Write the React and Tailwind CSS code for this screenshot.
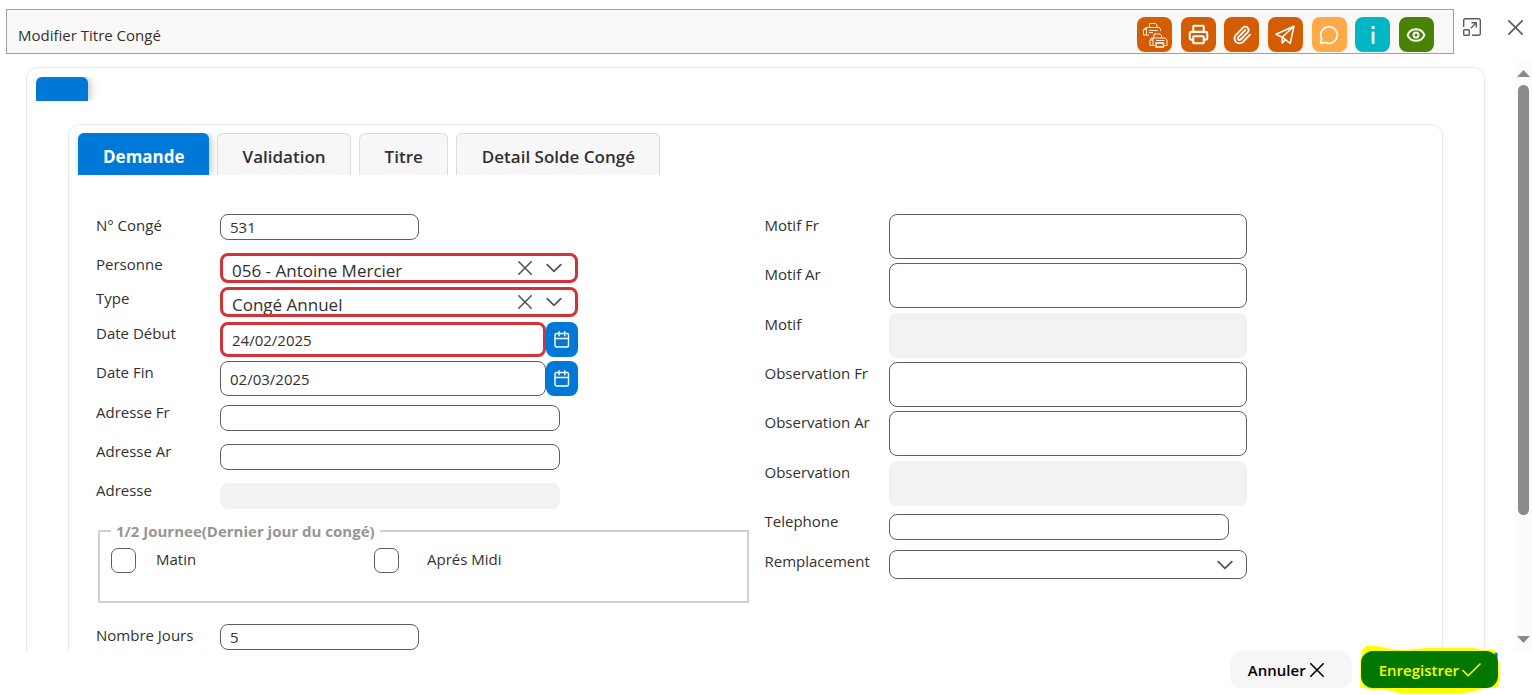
import { Eye, MessageCircle, Paperclip, Printer } from "lucide-react";

const leftAddress = [
  { id: "adresseFr", label: "Adresse Fr" },
  { id: "adresseAr", label: "Adresse Ar" },
  { id: "adresse", label: "Adresse", disabled: true },
];

const rightAreas = [
  { id: "motifFr", label: "Motif Fr", row: "h-[49px]" },
  { id: "motifAr", label: "Motif Ar", row: "h-[50px]" },
  { id: "motif", label: "Motif", row: "h-[49px]", disabled: true },
  { id: "observationFr", label: "Observation Fr", row: "h-[49px]" },
  { id: "observationAr", label: "Observation Ar", row: "h-[50px]" },
  { id: "observation", label: "Observation", row: "h-[49px]", disabled: true },
];

const inputClass =
  "block h-[26px] rounded-[8px] border border-[#605e5c] bg-white px-[9px] text-[15px] outline-none disabled:border-[#f3f2f1] disabled:bg-[#f3f2f1]";

function Row({ id, label, className = "h-[39px]", children }) {
  return (
    <div className={`flex items-start ${className}`}>
      <label htmlFor={id} className="w-[124px] shrink-0 whitespace-nowrap text-[15px] leading-[22px]">
        {label}
      </label>
      {children}
    </div>
  );
}

function Chevron() {
  return (
    <svg viewBox="0 0 16 16" className="size-4 shrink-0" fill="none" stroke="#555" strokeWidth="1.8" strokeLinecap="round" strokeLinejoin="round" aria-hidden="true">
      <path d="M1.2 4.6 8 11.4l6.8-6.8" />
    </svg>
  );
}

function Cross({ className = "size-[14px]" }) {
  return (
    <svg viewBox="0 0 14 14" className={className} fill="none" stroke="currentColor" strokeWidth="1.6" strokeLinecap="round" aria-hidden="true">
      <path d="M.8.8l12.4 12.4M13.2.8.8 13.2" />
    </svg>
  );
}

function ComboBox({ id, value }) {
  return (
    <div className="flex h-[30px] w-[358px] items-center overflow-hidden rounded-[8px] border-3 border-[#d13438] bg-white pr-[13px]">
      <select id={id} defaultValue={value} className="h-7 min-w-0 flex-1 appearance-none bg-transparent pl-[9px] pt-[5px] text-[17px] leading-6 outline-none">
        <option>{value}</option>
      </select>
      <button type="button" aria-label="Effacer" className="mr-[14px] text-[#555]">
        <Cross />
      </button>
      <Chevron />
    </div>
  );
}

function DateBox({ id, value, required }) {
  return (
    <div className="flex h-[35px] w-[358px]">
      <input
        id={id}
        type="text"
        defaultValue={value}
        className={`min-w-0 flex-1 rounded-[8px] bg-white px-[9px] pt-[2px] text-[15px] outline-none ${
          required ? "border-3 border-[#d13438]" : "border border-[#605e5c]"
        }`}
      />
      <button type="button" aria-label="Calendrier" className="flex w-8 items-center justify-center rounded-[8px] bg-[#0078d7]">
        <svg viewBox="0 0 16 18" className="h-[18px] w-4" fill="none" stroke="white" strokeWidth="1.4" strokeLinecap="round" aria-hidden="true">
          <rect x="1" y="2.5" width="13.5" height="13.5" rx="1.5" />
          <path d="M1 7.5h13.5M5 .8v4M10.7 .8v4" />
        </svg>
      </button>
    </div>
  );
}

function MultiPrinterIcon() {
  return (
    <svg viewBox="0 0 26 26" className="size-[26px]" fill="none" stroke="#fff" strokeWidth=".9" strokeLinejoin="round" aria-hidden="true">
      <path d="M7.5 5.5v-4h6l1.5 1.500v2.500M4 5.500h13.500l1 2V9M4 5.500 1.500 7.500v5.500H7M1.500 7.500h3M4.500 5.500v7.500M7 8.500h8.500" />
      <path d="M7 10.500h4" />
      <path d="M12 16v-4h6l1.500 1.500V16M9.500 16h13.500l2 2v5.500h-3M9.500 16 8 18v5.500h5M11 16v7.500M14 18.500h8.500M8 18h3" />
      <path d="M14 21h7.500v4H14z" strokeWidth="1.300" />
    </svg>
  );
}

function SendIcon() {
  return (
    <svg viewBox="0 0 20 20" className="size-5" fill="none" stroke="#fff" strokeWidth="1.5" strokeLinecap="round" strokeLinejoin="round" aria-hidden="true">
      <path d="M19 1.200 1 9.300l6.200 2.900 8 6.200zM19 1.200 7.200 12.200v5.800l3.200-3.300" />
    </svg>
  );
}

function InfoIcon() {
  return (
    <svg viewBox="0 0 20 20" className="size-5" fill="#fff" aria-hidden="true">
      <rect x="8.5" y="1" width="3.2" height="3" rx="1" />
      <rect x="8.7" y="6.5" width="2.8" height="12.5" rx="1" />
    </svg>
  );
}

const actions = [
  { label: "Imprimer tout", bg: "bg-[#d35d00]", icon: <MultiPrinterIcon /> },
  { label: "Imprimer", bg: "bg-[#d35d00]", icon: <Printer size={21} strokeWidth={2.3} /> },
  { label: "Pièces jointes", bg: "bg-[#d35d00]", icon: <Paperclip size={20} strokeWidth={2.2} /> },
  { label: "Envoyer", bg: "bg-[#d35d00]", icon: <SendIcon /> },
  { label: "Commentaires", bg: "bg-[#ffaa46]", icon: <MessageCircle size={20} strokeWidth={2.1} /> },
  { label: "Informations", bg: "bg-[#00b7c3]", icon: <InfoIcon /> },
  { label: "Aperçu", bg: "bg-[#498205]", icon: <Eye size={20} strokeWidth={2.4} /> },
];

const tabs = ["Demande", "Validation", "Titre", "Detail Solde Congé"];

export default function App() {
  return (
    <div className="flex h-screen flex-col overflow-hidden bg-white font-['Open_Sans',sans-serif] text-[#323130]">
      <header className="flex shrink-0 items-start pl-[6px] pt-[9px]">
        <div className="flex h-[45px] flex-1 items-start justify-between border border-[#a19f9d] bg-[#faf9f8] pl-[11px] pr-[19px] pt-[7px]">
          <h1 className="pt-[7px] text-[15px] leading-[22px]">Modifier Titre Congé</h1>
          <div className="flex w-[297px] justify-between">
            {actions.map((a) => (
              <button
                key={a.label}
                type="button"
                aria-label={a.label}
                className={`flex size-[35px] items-center justify-center rounded-[8px] text-white ${a.bg}`}
              >
                {a.icon}
              </button>
            ))}
          </div>
        </div>
        <div className="flex w-[78px] items-center justify-between pl-[9px] pr-[9px] pt-[9px] text-[#605e5c]">
          <button type="button" aria-label="Agrandir">
            <svg viewBox="0 0 18 18" className="size-[18px]" fill="none" stroke="currentColor" strokeWidth="1.4" aria-hidden="true">
              <path d="M.7 9V2.500Q.7.700 2.500.700h13q1.800 0 1.800 1.800v13q0 1.800-1.800 1.800H9" />
              <rect x=".7" y="11.7" width="5.6" height="5.6" rx=".8" />
              <path d="M7.800 10.200 13 5M8.500 4.700h4.800v4.800" />
            </svg>
          </button>
          <button type="button" aria-label="Fermer">
            <Cross className="size-[15px]" />
          </button>
        </div>
      </header>

      <div className="mt-2 flex min-h-0 flex-1">
        <main className="min-w-0 flex-1 overflow-hidden pl-[26px] pr-[30px] pt-[5px]">
          <section className="min-h-[800px] rounded-[12px] border border-[#eaeaea] px-[41px] pt-[9px]">
            <div className="-ml-8 overflow-hidden">
              <button type="button" aria-label="Onglet" className="block h-6 w-[52px] rounded-t-[6px] bg-[#0078d7] shadow-[2px_0_8px_rgba(0,0,0,0.25)]" />
            </div>

            <div className="mt-[23px] min-h-[700px] rounded-[12px] border border-[#eaeaea] pt-2">
              <div role="tablist" className="flex gap-2 overflow-hidden pl-[9px]">
                {tabs.map((t, i) => (
                  <button
                    key={t}
                    type="button"
                    role="tab"
                    aria-selected={i === 0}
                    className={`h-[42px] rounded-t-[6px] pl-[25px] pr-6 pt-[5px] text-[17px] leading-6 ${
                      i === 0
                        ? "bg-[#0078d7] font-bold text-white shadow-[2px_0_8px_rgba(0,0,0,0.25)]"
                        : "border border-b-0 border-[#dcdcdc] bg-[#f7f7f7] font-semibold"
                    }`}
                  >
                    {t}
                  </button>
                ))}
              </div>

              <form className="grid grid-cols-2 pt-[39px]">
                <div className="pl-[27px]">
                  <Row id="numero" label="N° Congé">
                    <input id="numero" type="text" defaultValue="531" className={`${inputClass} w-[199px]`} />
                  </Row>
                  <Row id="personne" label="Personne" className="h-[34px]">
                    <ComboBox id="personne" value="056 - Antoine Mercier" />
                  </Row>
                  <Row id="type" label="Type" className="h-[35px]">
                    <ComboBox id="type" value="Congé Annuel" />
                  </Row>
                  <Row id="dateDebut" label="Date Début">
                    <DateBox id="dateDebut" value="24/02/2025" required />
                  </Row>
                  <Row id="dateFin" label="Date Fin" className="h-10">
                    <DateBox id="dateFin" value="02/03/2025" />
                  </Row>
                  {leftAddress.map((f) => (
                    <Row key={f.id} id={f.id} label={f.label}>
                      <input id={f.id} type="text" disabled={f.disabled} className={`${inputClass} mt-1 w-[340px]`} />
                    </Row>
                  ))}

                  <fieldset className="ml-[2px] mr-[7px] mt-[2px] h-[83px] border-2 border-[#d0d0d0] pl-[11px]">
                    <legend className="px-[5px] text-[15px] font-bold leading-[22px] text-[#979593]">
                      1/2 Journee(Dernier jour du congé)
                    </legend>
                    <div className="flex pt-[6px]">
                      <div className="flex w-[263px]">
                        <input id="matin" type="checkbox" className="size-[25px] appearance-none rounded-[7px] border border-[#605e5c] bg-white" />
                        <label htmlFor="matin" className="pl-5 text-[15px] leading-[22px]">Matin</label>
                      </div>
                      <div className="flex">
                        <input id="apresMidi" type="checkbox" className="size-[25px] appearance-none rounded-[7px] border border-[#605e5c] bg-white" />
                        <label htmlFor="apresMidi" className="pl-7 text-[15px] leading-[22px]">Aprés Midi</label>
                      </div>
                    </div>
                  </fieldset>

                  <div className="mt-[21px]">
                    <Row id="nombreJours" label="Nombre Jours">
                      <input id="nombreJours" type="text" defaultValue="5" className={`${inputClass} w-[199px]`} />
                    </Row>
                  </div>
                </div>

                <div className="pl-[9px]">
                  {rightAreas.map((f) => (
                    <Row key={f.id} id={f.id} label={f.label} className={f.row}>
                      <textarea
                        id={f.id}
                        disabled={f.disabled}
                        className="block h-[45px] w-[358px] resize-none rounded-[8px] border border-[#605e5c] bg-white px-2 text-[15px] outline-none disabled:border-[#f3f2f1] disabled:bg-[#f3f2f1]"
                      />
                    </Row>
                  ))}
                  <Row id="telephone" label="Telephone" className="h-10">
                    <input id="telephone" type="tel" className={`${inputClass} mt-1 w-[340px]`} />
                  </Row>
                  <Row id="remplacement" label="Remplacement">
                    <div className="flex h-[29px] w-[358px] items-center rounded-[8px] border border-[#605e5c] bg-white pr-[13px]">
                      <select id="remplacement" className="h-6 min-w-0 flex-1 appearance-none bg-transparent pl-2 outline-none">
                        <option></option>
                      </select>
                      <Chevron />
                    </div>
                  </Row>
                </div>
              </form>
            </div>
          </section>
        </main>

        <div className="flex w-[17px] shrink-0 flex-col items-center justify-between bg-[#fcfcfc] py-2" aria-hidden="true">
          <svg viewBox="0 0 13 7" className="h-[7px] w-[13px] shrink-0" fill="#8a8a8a">
            <path d="M6.500 0 13 7H0z" />
          </svg>
          <div className="mb-auto mt-2 h-[75%] w-[11px] rounded-full bg-[#8a8a8a]" />
          <svg viewBox="0 0 13 7" className="h-[7px] w-[13px] shrink-0" fill="#8a8a8a">
            <path d="M0 0h13L6.500 7z" />
          </svg>
        </div>
      </div>

      <footer className="flex h-11 shrink-0 items-start justify-end gap-[9px] pr-[34px]">
        <button type="button" className="flex h-[37px] items-center gap-1 rounded-[12px] bg-[#f6f6f6] pl-[18px] pr-7 pt-px text-[15px] font-semibold text-black">
          Annuler
          <Cross />
        </button>
        <div className="relative">
          {/* highlighter stroke around the save button */}
          <svg viewBox="480 135 420 150" className="absolute -left-px -top-[6px] h-[50px] w-[140px]" aria-hidden="true">
            <path
              fill="#ffff00"
              d="M481 263V180l4-25 12-17h34l29 7 50 5 80-7h130l30 7h36v33h13v57l-6 23-43 2-30 10-60 7H610l-35-10-60-5z"
            />
            <path fill="#0078d7" d="M884 158h9v25h-9z" />
          </svg>
          <button type="button" className="relative flex h-[37px] items-center gap-[3px] rounded-[12px] bg-[#007800] pl-[18px] pr-[17px] pt-px text-[15px] font-semibold text-[#ffff00]">
            Enregistrer
            <svg viewBox="0 0 19 14" className="h-[14px] w-[19px]" fill="none" stroke="currentColor" strokeWidth="1.6" strokeLinecap="round" strokeLinejoin="round" aria-hidden="true">
              <path d="M1 7.500 6.200 12.800 18 1" />
            </svg>
          </button>
        </div>
      </footer>
    </div>
  );
}
